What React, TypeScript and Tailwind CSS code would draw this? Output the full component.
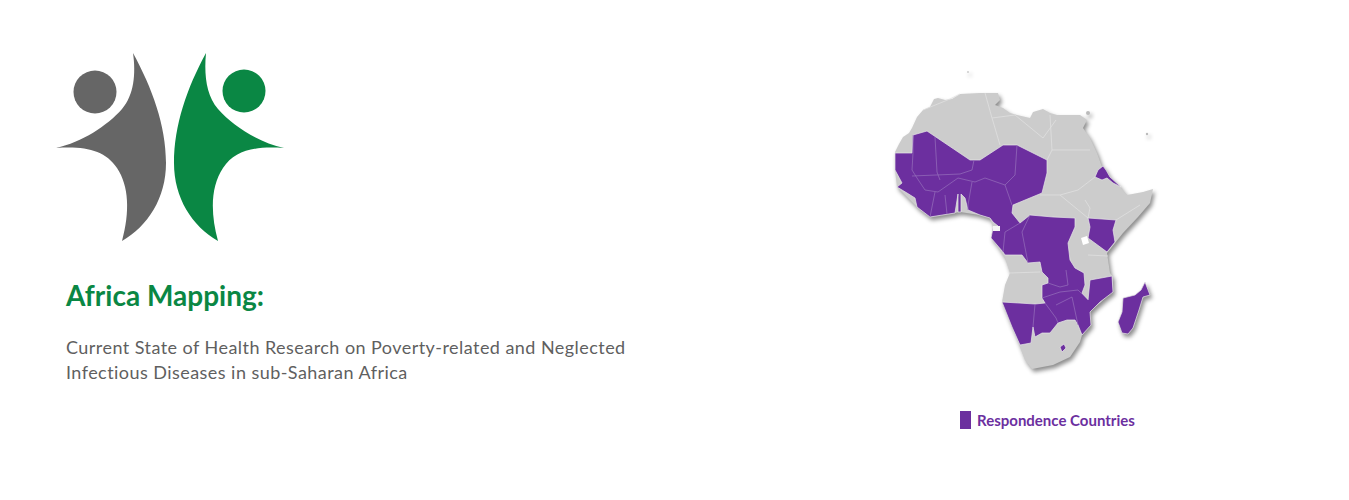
const lines = [
  "M913 135L913 153L912 170L917 178",
  "M935 137L937 172L940 180",
  "M912 176L960 174L972 170L974 160",
  "M917 178L925 190L938 192L958 178L975 182L985 178L1005 185L1015 175L1017 145",
  "M1005 185L1012 205",
  "M935 192L930 217M945 195L947 214",
  "M972 182L968 205L968 210",
  "M1020 223L1005 232L1003 252",
  "M1028 263L1022 232L1030 215",
  "M1048 283L1060 287L1068 285L1066 270",
  "M1042 298L1060 292L1078 290L1088 300",
  "M1035 304L1033 327M1045 303L1056 318L1058 323",
  "M1056 305L1072 297L1078 325",
];

const grayLines = [
  "M923 110L950 99L960 94M985 93L992 118L1000 145",
  "M992 118L1015 115L1043 138L1056 120",
  "M1050 115L1052 150L1047 160M1052 150L1090 150",
  "M1095 177L1078 190L1060 195L1040 195M1060 195L1088 218",
  "M1085 200L1090 208L1088 218M1116 220L1140 205",
  "M1010 273L1040 272M1088 255L1108 256",
];

function Logo() {
  return (
    <svg viewBox="50 45 240 200" className="block h-[200px] w-[240px]">
      <circle cx="95" cy="92" r="21.5" fill="#666666" />
      <path
        d="M133 53C152 88 166 125 166 163C166 198 148 226 122 241C130 212 129 186 117 168C105 150 85 146 56 148C82 142 107 126 122 109C134 95 136 74 133 53Z"
        fill="#666666"
      />
      <circle cx="244" cy="91" r="21.5" fill="#0a8744" />
      <path
        d="M206 53C187 88 174 125 174 163C174 198 192 226 218 241C210 212 211 186 223 168C235 150 255 146 284 148C258 142 233 126 218 109C206 95 204 74 206 53Z"
        fill="#0a8744"
      />
    </svg>
  );
}

function AfricaMap() {
  return (
    <svg
      viewBox="880 60 290 320"
      className="block h-[320px] w-[290px] blur-[0.7px] drop-shadow-[2px_3px_2px_rgba(0,0,0,0.45)]"
    >
      {/* continent */}
      <path
        fill="#cccccc"
        d="M895 152L899 144L903 137L909 133L912 128L917 117L923 110L930 107L934 99L938 98L945 100L952 99L960 94L980 93L998 93L1000 100L995 105L1003 108L1010 113L1017 115L1030 118L1033 112L1043 109L1050 113L1057 115L1080 115L1087 120L1083 128L1090 138L1097 153L1102 167L1110 177L1120 187L1127 195L1143 192L1153 189L1150 203L1138 217L1123 233L1115 243L1107 253L1110 273L1113 277L1113 290L1100 303L1088 313L1090 325L1082 335L1080 342L1070 357L1053 365L1032 369L1025 360L1020 347L1012 327L1002 302L1005 285L1010 273L1005 258L992 238L993 227L990 218L980 215L960 212L930 217L917 207L910 200L897 187L895 170Z"
      />
      <g fill="none" stroke="#e0e0e0" strokeWidth="0.8">
        {grayLines.map((d) => (
          <path key={d} d={d} />
        ))}
      </g>
      {/* lake victoria, red sea islands */}
      <path d="M1081 238L1087 236L1089 243L1083 245Z" fill="#ffffff" />
      <circle cx="1088" cy="113" r="2" fill="#bbbbbb" />
      <circle cx="1147" cy="134" r="1.2" fill="#bbbbbb" />
      <circle cx="968" cy="72" r="1" fill="#cccccc" />
      <g fill="#6c2f9f" stroke="#e8e8e8" strokeWidth="0.7" strokeLinejoin="round">
        <path d="M895 153L912 153L913 135L927 131L970 160L980 160L1003 145L1017 145L1047 160L1047 173L1042 193L1013 205L1012 213L1020 223L1030 215L1053 217L1075 218L1075 227L1068 243L1070 260L1075 268L1084 273L1085 285L1082 293L1088 300L1090 280L1112 276L1113 292L1100 302L1090 312L1091 325L1082 335L1078 325L1075 320L1067 320L1058 323L1050 333L1042 333L1035 337L1033 327L1031 343L1020 345L1012 327L1002 302L1035 304L1045 303L1042 298L1042 285L1048 283L1048 278L1042 272L1040 262L1028 263L1022 255L1005 255L1003 252L991 238L993 228L998 226L993 222L990 218L980 215L968 210L965 198L961 194L961 212L958 212L958 194L955 213L930 217L917 207L915 198L907 193L897 187L902 183L895 170Z" />
        <path d="M1088 218L1116 220L1113 230L1115 242L1107 252L1088 238L1090 227Z" />
        <path d="M1103 166L1106 170L1110 177L1121 187L1113 183L1107 178L1102 180L1095 177L1098 170Z" />
        <path d="M1145 282L1150 295L1143 297L1139 310L1133 328L1128 334L1122 333L1118 322L1122 312L1123 298L1135 295L1141 290Z" />
        <path d="M1060 347L1064 344L1066 348L1062 352Z" />
      </g>
      <path d="M993 226L1000 226L1000 231L993 231Z" fill="#f4f4f4" />
      <g fill="none" stroke="#9670bb" strokeWidth="0.7">
        {lines.map((d) => (
          <path key={d} d={d} />
        ))}
      </g>
    </svg>
  );
}

export default function App() {
  return (
    <div className="flex h-[500px] w-full overflow-hidden bg-white font-['Lato',sans-serif]">
      <div className="w-[880px] shrink-0 pl-[50px] pt-[45px]">
        <Logo />
        <div className="pl-4">
          <h1 className="mt-[31px] text-[28px] leading-[38px] font-bold text-[#0a8744]">Africa Mapping:</h1>
          <p className="mt-[21px] text-[18px] leading-[25px] tracking-[0.45px] whitespace-nowrap text-[#5f5f5f]">
            Current State of Health Research on Poverty-related and Neglected
            <br />
            Infectious Diseases in sub-Saharan Africa
          </p>
        </div>
      </div>
      <div className="w-[290px] shrink-0 pt-[60px]">
        <AfricaMap />
        <div className="mt-[31px] ml-[80px] flex items-center gap-[6px]">
          <span className="h-[18px] w-[11px] bg-[#6c2f9f]" />
          <span className="text-[15px] leading-[18px] font-bold whitespace-nowrap text-[#6c2f9f]">Respondence Countries</span>
        </div>
      </div>
    </div>
  );
}
